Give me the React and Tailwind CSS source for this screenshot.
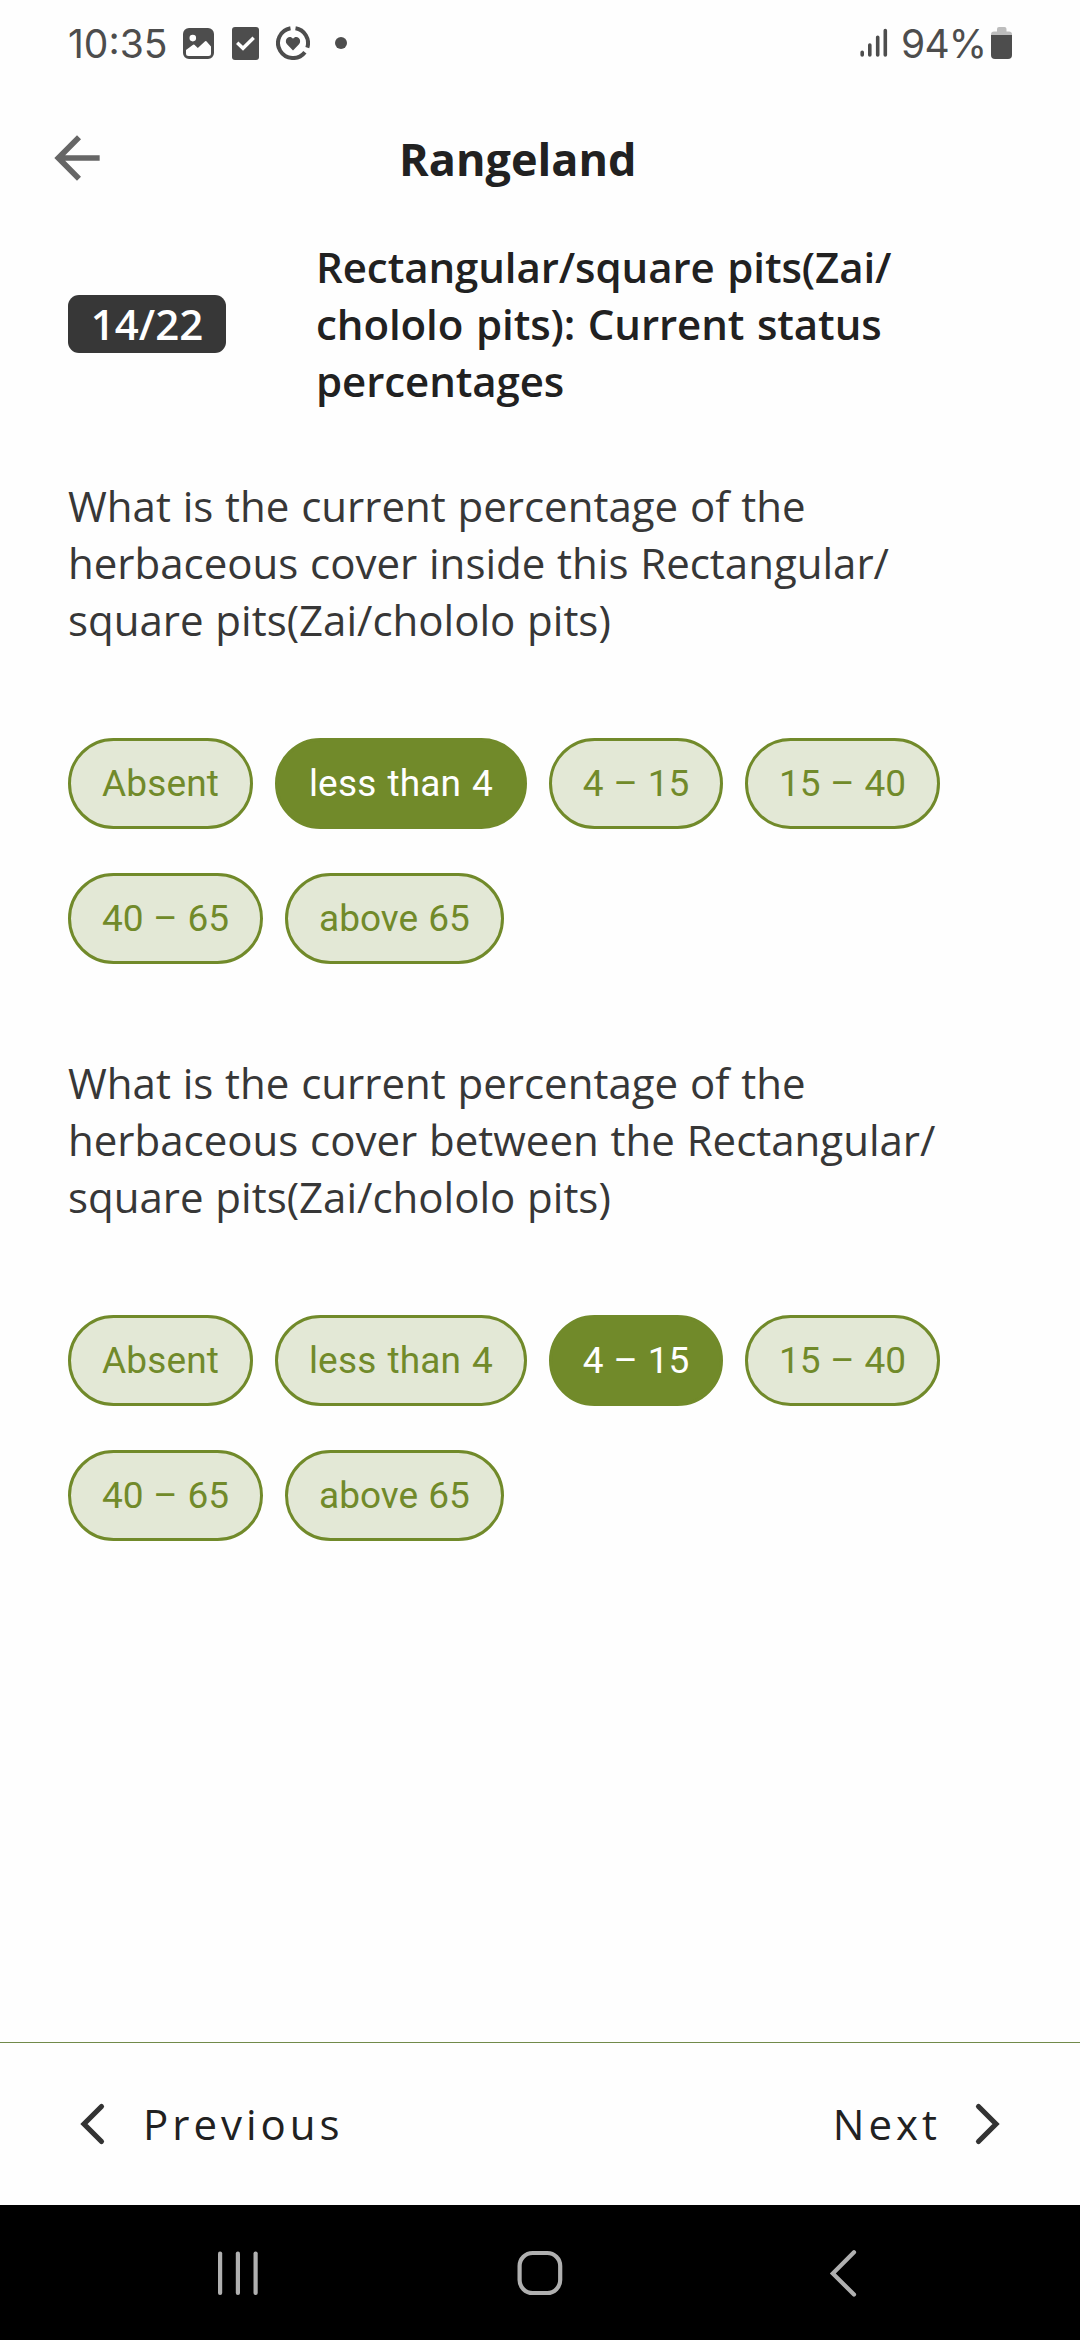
const OPTIONS = [
  { label: "Absent", className: "w-[185px] tracking-[0.1px]" },
  { label: "less than 4", className: "w-[252px] tracking-[0.2px] [word-spacing:1.5px]" },
  { label: "4 – 15", className: "w-[174px] [word-spacing:0.8px]" },
  { label: "15 – 40", className: "w-[195px] [word-spacing:0.6px]" },
  { label: "40 – 65", className: "w-[195px] [word-spacing:0.6px]" },
  { label: "above 65", className: "w-[219px] [word-spacing:1px]" },
];

function StatusBar() {
  return (
    <div className="flex h-[86px] items-center justify-between pl-[68px] pr-[68px] text-[#4d4d4d]">
      <div className="flex items-center">
        <span className="w-[115px] whitespace-nowrap font-['Inter',sans-serif] text-[39px] leading-none font-normal tracking-[0px]">
          10:35
        </span>
        <svg className="h-[31px] w-[31px]" viewBox="0 0 31 31">
          <path
            fillRule="evenodd"
            fill="currentColor"
            d="M6 0h19a6 6 0 0 1 6 6v19a6 6 0 0 1-6 6H6a6 6 0 0 1-6-6V6a6 6 0 0 1 6-6ZM3 22v3.500a2.500 2.500 0 0 0 2.500 2.500h20a2.500 2.500 0 0 0 2.500-2.500V18.500l-4.600-5.200a.9.900 0 0 0-1.300 0L14.800 20l-3.400-3.200a1 1 0 0 0-1.300 0ZM9.800 6.800a3.300 3.300 0 1 0 0 6.600a3.300 3.300 0 0 0 0-6.600Z"
          />
        </svg>
        <svg className="ml-[18px] h-[33px] w-[27px]" viewBox="0 0 27 33">
          <rect width="27" height="33" rx="3" fill="currentColor" />
          <path d="M5.200 15.800 11 21.300 21.700 10.700" fill="none" stroke="#fefefe" strokeWidth="3.400" />
        </svg>
        <svg className="ml-[17px] h-[34px] w-[34px]" viewBox="0 0 34 34">
          <g fill="none" stroke="currentColor" strokeWidth="4">
            <path d="M19.500 2.250A15 15 0 0 1 31.300 21.600" />
            <path d="M28.900 26.200A15 15 0 1 1 14.500 2.250" />
          </g>
          <path
            fill="currentColor"
            d="M17 24.500 11 18.300C9.300 16.300 9.500 13.400 11.300 11.900C13 10.500 15.600 10.800 17 12.700C18.400 10.800 21 10.500 22.700 11.900C24.500 13.400 24.700 16.300 23 18.300Z"
          />
        </svg>
        <span className="ml-[25px] h-3 w-3 rounded-full bg-[#4d4d4d]" />
      </div>
      <div className="flex items-center">
        <svg className="h-[30px] w-[28px]" viewBox="0 0 28 30">
          <g stroke="currentColor" strokeWidth="3.600" strokeLinecap="round">
            <path d="M2.200 24.300v2.700M9.800 17v10M17.700 9.300v17.700M25.300 2.500v24.500" />
          </g>
        </svg>
        <span className="ml-[13px] w-[90px] whitespace-nowrap font-['Inter',sans-serif] text-[39px] leading-none font-normal tracking-[-0.8px]">
          94%
        </span>
        <svg className="h-8 w-[21px]" viewBox="0 0 21 32">
          <path fill="#bdbdbd" d="M6 2a2 2 0 0 1 2-2h5.500a2 2 0 0 1 2 2v2.500H18a3 3 0 0 1 3 3V9H0V7.500a3 3 0 0 1 3-3h3Z" />
          <path fill="currentColor" d="M0 8h21v20a4 4 0 0 1-4 4H4a4 4 0 0 1-4-4Z" />
        </svg>
      </div>
    </div>
  );
}

function Chip({ label, className, selected }) {
  return (
    <button
      className={
        "h-[91px] rounded-full border-[3px] border-[#718a2a] text-center whitespace-nowrap font-['Roboto',sans-serif] text-[37px] leading-none " +
        className +
        (selected ? " bg-[#718a2a] text-white" : " bg-[#e3e8d6] text-[#718a2a]")
      }
    >
      {label}
    </button>
  );
}

function Question({ children, value }) {
  return (
    <section className="mb-[90px] flex flex-col gap-[90px]">
      <p className="text-[42px] leading-[57px] text-[#373737] [word-spacing:0.9px]">{children}</p>
      <div className="flex flex-wrap gap-x-[22px] gap-y-[44px]">
        {OPTIONS.map(({ label, className }) => (
          <Chip key={label} label={label} className={className} selected={label === value} />
        ))}
      </div>
    </section>
  );
}

export default function App() {
  return (
    <div className="flex h-[2340px] w-[1080px] flex-col overflow-hidden bg-[#fefefe] font-['Open_Sans',sans-serif] text-[#212121]">
      <StatusBar />

      <header className="flex h-[144px] items-center pl-[43px]">
        <svg className="h-[68px] w-[68px]" viewBox="0 0 24 24" fill="#666666">
          <path d="M20 11H7.830l5.590-5.590L12 4l-8 8 8 8 1.410-1.410L7.830 13H20v-2z" />
        </svg>
        <h1 className="ml-[288px] pt-[2px] text-[45px] leading-[60px] font-bold">Rangeland</h1>
      </header>

      <main className="flex-1 px-[68px] pt-[8px]">
        <div className="mb-[68px] flex items-center">
          <span className="flex h-[58px] w-[158px] items-center justify-center rounded-[11px] bg-[#373737] text-[42px] leading-[57px] font-semibold text-white">
            14/22
          </span>
          <h2 className="ml-[90px] text-[42px] leading-[57px] font-semibold whitespace-nowrap tracking-[-0.08px] [word-spacing:1.8px]">
            Rectangular/square pits(Zai/
            <br />
            chololo pits): Current status
            <br />
            percentages
          </h2>
        </div>

        <Question value="less than 4">
          What is the current percentage of the
          <br />
          herbaceous cover inside this Rectangular/
          <br />
          square pits(Zai/chololo pits)
        </Question>
        <Question value="4 – 15">
          What is the current percentage of the
          <br />
          herbaceous cover between the Rectangular/
          <br />
          square pits(Zai/chololo pits)
        </Question>
      </main>

      <footer className="flex h-[163px] items-center justify-between border-t border-[#718a4a] px-[79px] text-[42px] leading-[57px] tracking-[4px]">
        <button className="flex items-center">
          <svg className="h-11 w-7" viewBox="0 0 28 44">
            <path d="M22.500 4.500 5 22l17.500 17.500" fill="none" stroke="#333333" strokeWidth="5.200" strokeLinecap="round" />
          </svg>
          <span className="ml-[36px] pb-[2px]">Previous</span>
        </button>
        <button className="flex items-center">
          <span className="mr-[32px] pb-[2px]">Next</span>
          <svg className="h-11 w-7" viewBox="0 0 28 44">
            <path d="M5.500 4.500 23 22 5.500 39.500" fill="none" stroke="#333333" strokeWidth="5.200" strokeLinecap="round" />
          </svg>
        </button>
      </footer>

      <nav className="flex h-[135px] items-center bg-black pl-[214px]">
        <svg className="h-12 w-12" viewBox="0 0 48 48" fill="#b0b0b0">
          <rect x="4" y="2.500" width="4.200" height="43.500" rx="2" />
          <rect x="21.800" y="2.500" width="4.200" height="43.500" rx="2" />
          <rect x="39.500" y="2.500" width="4.200" height="43.500" rx="2" />
        </svg>
        <svg className="ml-[254px] h-12 w-12" viewBox="0 0 48 48">
          <rect x="3.600" y="4" width="40.600" height="40" rx="13" fill="none" stroke="#b0b0b0" strokeWidth="4.200" />
        </svg>
        <svg className="ml-[256px] h-[50px] w-[50px]" viewBox="0 0 50 50">
          <path d="M34 4.300 12.800 25.500 34 46.500" fill="none" stroke="#b0b0b0" strokeWidth="4.200" strokeLinecap="round" />
        </svg>
      </nav>
    </div>
  );
}
